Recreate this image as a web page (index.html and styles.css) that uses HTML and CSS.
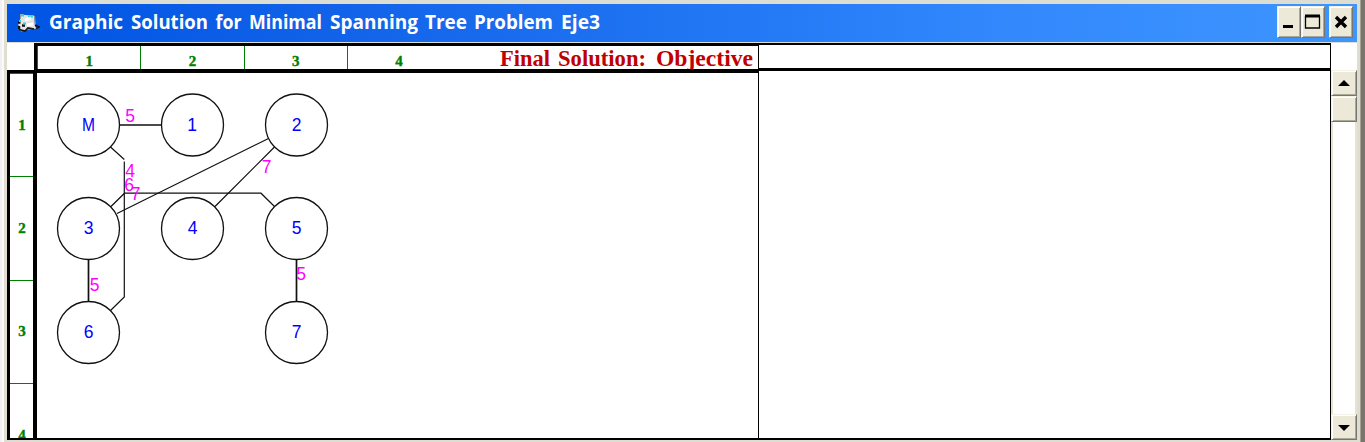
FILE: index.html
```html
<!DOCTYPE html>
<html lang="en">
<head>
<meta charset="utf-8">
<title>Graphic Solution for Minimal Spanning Tree Problem Eje3</title>
<link rel="stylesheet" href="styles.css">
</head>
<body>
<div class="window">
  <header class="titlebar">
    <svg class="app-icon" width="22" height="20" viewBox="0 0 22 20">
      <path d="M2 1l5 1 9 .5 1 11 2 2-9 1-7 2-2-4-1-5 2-2z" fill="#e6e4e2"/>
      <path d="M2.500 1v5M16.500 3l1 9" fill="none" stroke="#999" stroke-width="1"/>
      <path d="M17 12l4 2-3 1.500M1 16.500l6 1.500 3-3 6 1" fill="none" stroke="#151515" stroke-width="1.700"/>
      <path d="M0 9.500h2.500M4 12.500h3M1 13v3" stroke="#111" stroke-width="2.500"/>
      <path d="M3 2.500h3M10 3.500h5M1 8h2M5 10.500h3" stroke="#20dce8" stroke-width="1.800"/>
      <path d="M7 7l6-2M9 12l6-1" stroke="#fff" stroke-width="3"/>
    </svg>
    <svg class="caption" width="560" height="38">
      <text x="0" y="25" textLength="74" lengthAdjust="spacingAndGlyphs">Graphic</text>
      <text x="82" y="25" textLength="77" lengthAdjust="spacingAndGlyphs">Solution</text>
      <text x="166.500" y="25" textLength="26" lengthAdjust="spacingAndGlyphs">for</text>
      <text x="200" y="25" textLength="73" lengthAdjust="spacingAndGlyphs">Minimal</text>
      <text x="281" y="25" textLength="88" lengthAdjust="spacingAndGlyphs">Spanning</text>
      <text x="376" y="25" textLength="42" lengthAdjust="spacingAndGlyphs">Tree</text>
      <text x="425" y="25" textLength="79" lengthAdjust="spacingAndGlyphs">Problem</text>
      <text x="512" y="25" textLength="39" lengthAdjust="spacingAndGlyphs">Eje3</text>
    </svg>
    <div class="controls">
      <button class="btn" aria-label="Minimize"><svg width="22" height="30"><path d="M5 19.500h10" stroke="#000" stroke-width="3"/></svg></button>
      <button class="btn" aria-label="Maximize"><svg width="22" height="30"><path d="M3.500 9v12h14V9" fill="none" stroke="#000" stroke-width="1.300"/><path d="M3 9h15" stroke="#000" stroke-width="3"/></svg></button>
      <button class="btn close" aria-label="Close"><svg width="22" height="30"><path d="M6 10l10 10M16 10L6 20" stroke="#000" stroke-width="3.400"/></svg></button>
    </div>
  </header>
  <main class="workspace">
    <div class="corner"></div>
    <div class="col-head">
      <span>1</span><span>2</span><span>3</span><span>4</span>
      <svg class="result" width="258" height="23">
        <text x="0" y="20" textLength="50" lengthAdjust="spacingAndGlyphs">Final</text>
        <text x="58" y="20" textLength="88" lengthAdjust="spacingAndGlyphs">Solution:</text>
        <text x="156" y="20" textLength="97" lengthAdjust="spacingAndGlyphs">Objective</text>
      </svg>
    </div>
    <div class="extra-head"></div>
    <div class="head-gap"></div>
    <div class="row-head"><span>1</span><span>2</span><span>3</span><span>4</span></div>
    <div class="canvas">
      <svg class="graph" width="320" height="320" viewBox="37 73 320 320">
        <g class="edges">
          <path d="M119 125H161M88.500 260V301M296.500 260V301" class="strong"/>
          <path d="M110.500 147L124.300 159.500M124.300 161.500V297L110 311"/>
          <path d="M111 206.500L124.500 193.200H261L274.500 206.500"/>
          <path d="M117 213.500L268.500 138.500M215 206.500L274.500 147"/>
        </g>
        <g class="nodes">
          <circle cx="88.500" cy="125" r="31"/><circle cx="192.500" cy="125" r="31"/><circle cx="296.500" cy="125" r="31"/>
          <circle cx="88.500" cy="228.500" r="31"/><circle cx="192.500" cy="228.500" r="31"/><circle cx="296.500" cy="228.500" r="31"/>
          <circle cx="88.500" cy="332.500" r="31"/><circle cx="296.500" cy="332.500" r="31"/>
        </g>
        <g class="names">
          <text x="88.500" y="131" textLength="13" lengthAdjust="spacingAndGlyphs">M</text><text x="192" y="131">1</text><text x="296.500" y="131">2</text>
          <text x="88.500" y="234">3</text><text x="192.500" y="234">4</text><text x="296.500" y="234">5</text>
          <text x="88.500" y="338">6</text><text x="296.500" y="338">7</text>
        </g>
        <g class="costs">
          <text x="130" y="122">5</text><text x="130" y="176.500">4</text><text x="129" y="190.500">6</text>
          <text x="135.500" y="199.500">7</text><text x="266.500" y="173">7</text>
          <text x="94.500" y="291">5</text><text x="301" y="280">5</text>
        </g>
      </svg>
    </div>
    <div class="extra"></div>
    <div class="scrollbar">
      <button class="sbtn" aria-label="Scroll up"><svg width="24" height="24"><path d="M6 15L12 9l6 6z"/></svg></button>
      <div class="thumb"></div>
      <div class="track"></div>
      <button class="sbtn" aria-label="Scroll down"><svg width="24" height="24"><path d="M6 10h12l-6 6z"/></svg></button>
    </div>
  </main>
</div>
</body>
</html>
```
FILE: styles.css
```css
* { box-sizing: border-box; }
body { margin: 0; background: #ece9d8; overflow: hidden; }
svg { display: block; }
.window {
  width: 1365px;
  height: 442px;
  display: flex;
  flex-direction: column;
  padding: 4px 8px 2px 7px;
  background: linear-gradient(90deg, #f1f1f5 0 2px, #fafaf8 2px 4px, #e0ddd1 4px 7px, #deddd2 7px 1360px, #a5a295 1360px 1361px, #77756d 1361px 1365px);
}
.titlebar {
  flex: none;
  height: 38px;
  display: flex;
  align-items: center;
  padding: 0 4px 0 11px;
  background: linear-gradient(90deg, #0054e3, #1263e9 25%, #2379f5 55%, #3389fc 75%, #3d95ff);
}
.app-icon { margin-right: 9px; }
.caption text { font: bold 20px "Open Sans", sans-serif; fill: #fff; }
.controls { display: flex; margin: 0 0 2px auto; }
.btn, .sbtn, .thumb {
  padding: 0;
  background: #ece9d8;
  border: 1px solid;
  border-color: #f4f2e8 #77756d #77756d #f4f2e8;
  box-shadow: inset 1px 1px #fff, inset -1px -1px #aca899;
}
.btn { width: 24px; height: 32px; }
.close { margin-left: 4px; }
.workspace {
  flex: 1;
  min-height: 0;
  display: grid;
  grid-template-columns: 27px 725px 572px 26px;
  grid-template-rows: 28px 1fr;
  background: #fff;
  border-top: 1px solid #deddd2;
}
.col-head {
  display: flex;
  height: 30px;
  border: solid #000;
  border-width: 3px 1px 4px 3px;
  z-index: 1;
}
.col-head span {
  flex: 0 0 103.300px;
  height: 23px;
  border-left: 1.500px solid #008000;
  padding-top: 8px;
  text-align: center;
}
.col-head span:nth-child(4) { margin-right: -60px; }
.col-head span, .row-head span {
  font: bold 15px/15px "Liberation Serif", serif;
  color: #008000;
  -webkit-text-stroke: .4px #008000;
}
.result { flex: none; margin-left: auto; }
.result text { font: bold 23px "Liberation Serif", serif; fill: #c00000; }
.extra-head { border: solid #000; border-width: 2px 1px 3px 0; }
.row-head {
  display: flex;
  flex-direction: column;
  margin-top: -1px;
  border: solid #000;
  border-width: 3px 0 2px 3px;
  overflow: hidden;
}
.row-head span {
  flex: 0 0 103.300px;
  display: flex;
  align-items: center;
  justify-content: center;
  border-top: 1.500px solid #008000;
}
.canvas { margin-left: -1px; border: solid #000; border-width: 2px 1px 2px 4px; }
.edges path { fill: none; stroke: #111; stroke-width: 1.200; }
.edges .strong { stroke-width: 1.700; }
.nodes circle { fill: none; stroke: #111; stroke-width: 1.300; }
.graph text { font: 17.500px "Liberation Sans", Arial, sans-serif; text-anchor: middle; }
.names { fill: #0000ff; }
.costs { fill: #ff00ff; }
.extra { border: solid #000; border-width: 0 1px 2px 0; }
.scrollbar { display: flex; flex-direction: column; margin-top: -1px; }
.sbtn, .thumb { width: 26px; height: 26px; flex: none; }
.track { flex: 1; background: #fff; border: solid #e7e3d3; border-width: 0 2px; }
```
